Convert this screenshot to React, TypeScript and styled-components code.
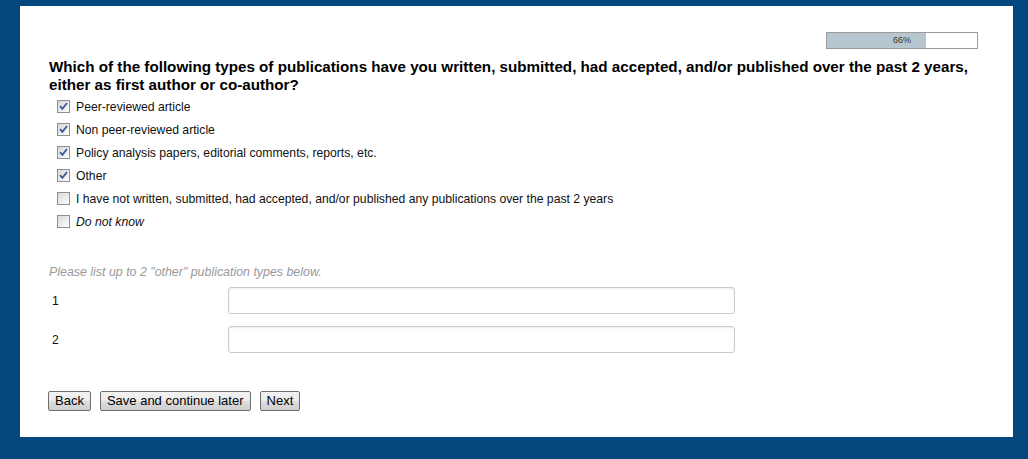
import styled, {createGlobalStyle} from 'styled-components';

const options = [
  {label: 'Peer-reviewed article', checked: true},
  {label: 'Non peer-reviewed article', checked: true},
  {label: 'Policy analysis papers, editorial comments, reports, etc.', checked: true},
  {label: 'Other', checked: true},
  {label: 'I have not written, submitted, had accepted, and/or published any publications over the past 2 years', checked: false},
  {label: 'Do not know', checked: false, italic: true},
];

const GlobalStyle = createGlobalStyle`
  html, body {
    margin: 0;
    padding: 0;
    background: #03477f;
    font-family: 'Liberation Sans', Arial, sans-serif;
  }
`;

function CheckBox({checked}: {checked: boolean}) {
  return (
    <Box>
      {checked && (
        <svg width="9" height="9" viewBox="0 0 9 9">
          <path d="M1 4.2 L3.4 6.8 L8 1" fill="none" stroke="#3c5594" strokeWidth="1.8" />
        </svg>
      )}
    </Box>
  );
}

export default function App() {
  return (
    <>
      <GlobalStyle />
      <Page>
        <Panel>
          <ProgressRow>
            <Progress>
              <ProgressFill style={{width: '66%'}} />
              <ProgressText>66%</ProgressText>
            </Progress>
          </ProgressRow>
          <Question>
            Which of the following types of publications have you written, submitted, had accepted, and/or published over the past 2 years,
            <br />
            either as first author or co-author?
          </Question>
          <OptionList>
            {options.map((o) => (
              <OptionRow key={o.label}>
                <CheckBox checked={o.checked} />
                <OptionLabel $italic={o.italic}>{o.label}</OptionLabel>
              </OptionRow>
            ))}
          </OptionList>
          <Hint>Please list up to 2 "other" publication types below.</Hint>
          <FieldList>
            {['1', '2'].map((n) => (
              <FieldRow key={n}>
                <FieldLabel>{n}</FieldLabel>
                <TextInput type="text" />
              </FieldRow>
            ))}
          </FieldList>
          <Buttons>
            <Button>Back</Button>
            <Button>Save and continue later</Button>
            <Button>Next</Button>
          </Buttons>
        </Panel>
      </Page>
    </>
  );
}

const Page = styled.div`
  width: 1028px;
  height: 459px;
  padding: 6px 0 0 20px;
  box-sizing: border-box;
`;

const Panel = styled.div`
  width: 993px;
  height: 431px;
  background: #fff;
  box-sizing: border-box;
  padding: 26px 0 0 29px;
  display: flex;
  flex-direction: column;
`;

const ProgressRow = styled.div`
  display: flex;
  justify-content: flex-end;
  padding-right: 35px;
`;

const Progress = styled.div`
  position: relative;
  width: 150px;
  height: 15px;
  border: 1px solid #9b9b9b;
  background: #fff;
`;

const ProgressFill = styled.div`
  height: 100%;
  background: #b7c6ce;
`;

const ProgressText = styled.span`
  position: absolute;
  inset: 0;
  text-align: center;
  font-size: 9px;
  line-height: 15px;
  color: #333;
`;

const Question = styled.h2`
  margin: 9px 0 0;
  font-size: 15.2px;
  font-weight: bold;
  line-height: 18px;
  color: #000;
  white-space: nowrap;
`;

const OptionList = styled.div`
  margin-top: 1px;
  padding-left: 8px;
  display: flex;
  flex-direction: column;
`;

const OptionRow = styled.div`
  display: flex;
  align-items: center;
  height: 23px;
  gap: 6px;
`;

const Box = styled.span`
  width: 11px;
  height: 11px;
  border: 1px solid #8f8f8f;
  background: linear-gradient(135deg, #d8d8d8 0%, #f2f2f2 70%, #fff 100%);
  display: flex;
  align-items: center;
  justify-content: center;
  margin-top: -1px;
`;

const OptionLabel = styled.span<{$italic?: boolean}>`
  font-size: 12.2px;
  color: #111;
  font-style: ${(p) => (p.$italic ? 'italic' : 'normal')};
`;

const Hint = styled.p`
  margin: 32px 0 0;
  font-size: 12.4px;
  font-style: italic;
  color: #999;
  line-height: 14px;
`;

const FieldList = styled.div`
  margin-top: 8px;
  display: flex;
  flex-direction: column;
  gap: 12px;
`;

const FieldRow = styled.div`
  display: flex;
  align-items: center;
`;

const FieldLabel = styled.span`
  width: 176px;
  padding-left: 3px;
  font-size: 12.2px;
  color: #111;
`;

const TextInput = styled.input`
  width: 507px;
  height: 27px;
  box-sizing: border-box;
  border: 1px solid #cbcbcb;
  border-radius: 3px;
  box-shadow: inset 0 1px 2px rgba(0, 0, 0, 0.08);
  outline: none;
`;

const Buttons = styled.div`
  margin-top: 38px;
  margin-left: -1px;
  display: flex;
  gap: 9px;
`;

const Button = styled.button`
  font-family: 'Liberation Sans', Arial, sans-serif;
  font-size: 13px;
  line-height: 16px;
  height: 20px;
  padding: 0 6px;
  color: #000;
  border: 1px solid #707070;
  border-radius: 2px;
  background: linear-gradient(#f2f2f2 0%, #ebebeb 50%, #dddddd 51%, #cfcfcf 100%);
`;
